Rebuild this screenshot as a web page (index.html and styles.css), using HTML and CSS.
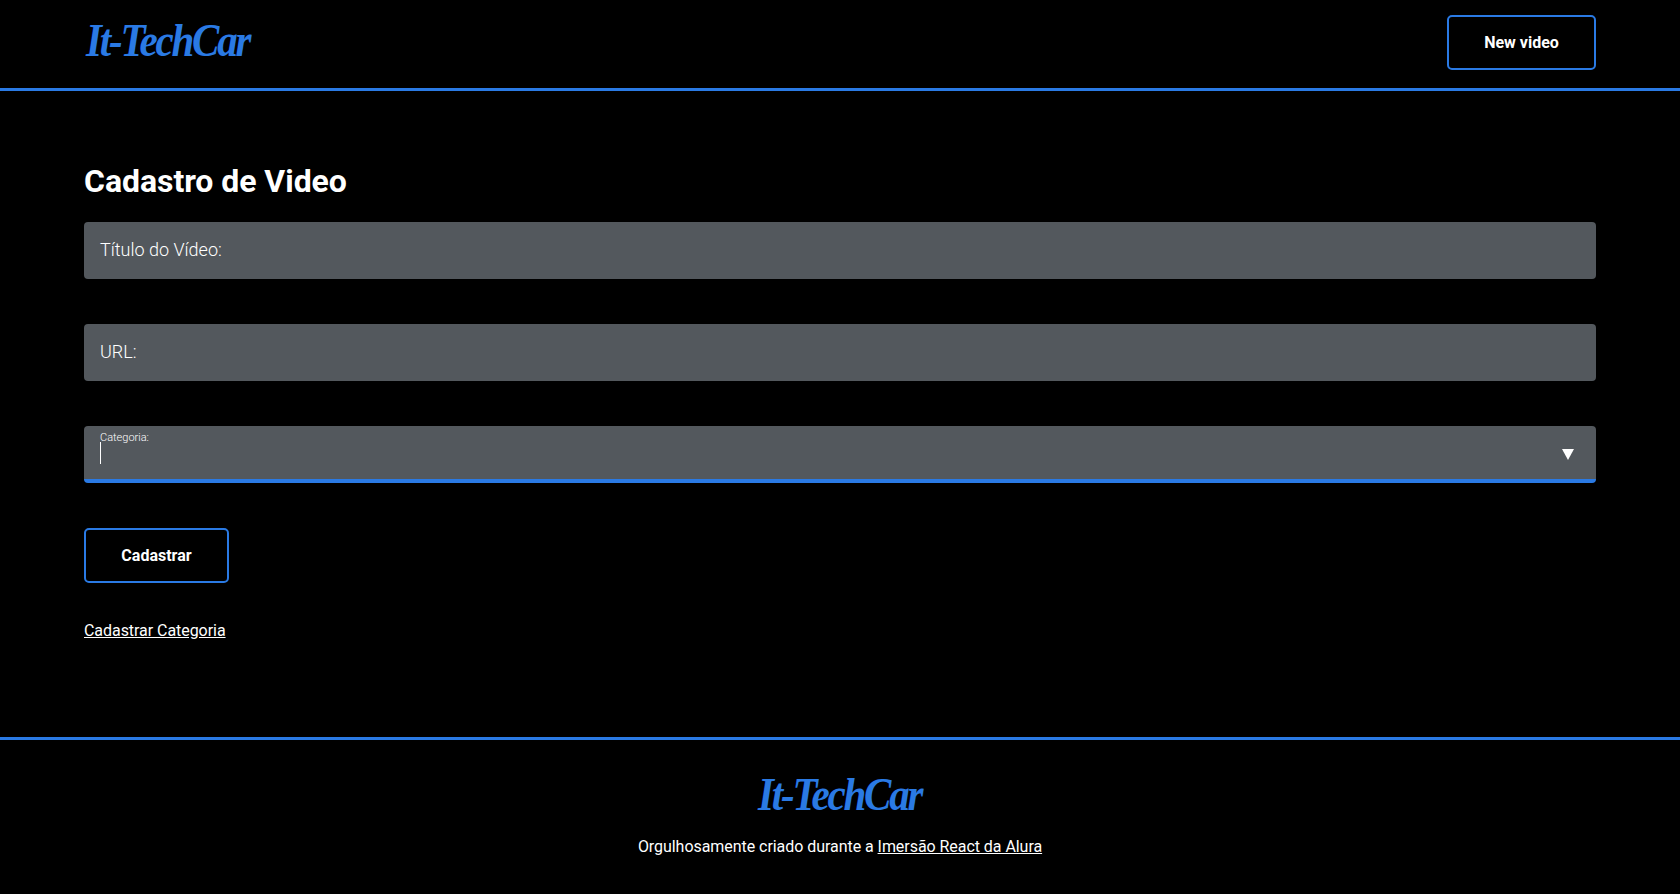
FILE: index.html
```html
<!DOCTYPE html>
<html lang="pt-BR">
<head>
    <meta charset="UTF-8">
    <meta name="viewport" content="width=device-width, initial-scale=1.0">
    <title>It-TechCar</title>
    <link rel="stylesheet" href="styles.css">
</head>
<body>
    <header class="menu">
        <a class="logo" href="#">It-TechCar</a>
        <a class="button button-new" href="#">New video</a>
    </header>

    <main class="content">
        <h1>Cadastro de Video</h1>
        <form class="form">
            <div class="field">
                <span class="field-label">Título do Vídeo:</span>
            </div>
            <div class="field">
                <span class="field-label">URL:</span>
            </div>
            <div class="field field-active">
                <span class="field-label">Categoria:</span>
                <span class="caret"></span>
                <span class="arrow"></span>
            </div>
            <button class="button button-submit" type="button">Cadastrar</button>
        </form>
        <a class="link" href="#">Cadastrar Categoria</a>
    </main>

    <footer class="footer">
        <a class="logo" href="#">It-TechCar</a>
        <p class="credits">Orgulhosamente criado durante a <a class="link" href="#">Imersão React da Alura</a></p>
    </footer>
</body>
</html>
```

FILE: styles.css
```css
* {
    box-sizing: border-box;
}
body {
    margin: 0;
    height: 894px;
    overflow: hidden;
    background-color: #000000;
    color: #ffffff;
    font-family: 'Roboto', 'Liberation Sans', sans-serif;
}
a {
    color: inherit;
}
.menu {
    height: 91px;
    padding: 15px 84px 0 86px;
    display: flex;
    justify-content: space-between;
    align-items: flex-start;
    border-bottom: 3px solid #2a7ae4;
}
.logo {
    display: block;
    width: 164px;
    color: #2a7ae4;
    font-family: 'Liberation Serif', serif;
    font-size: 41px;
    font-weight: 700;
    font-style: italic;
    line-height: 50px;
    letter-spacing: -2.2px;
    white-space: nowrap;
    text-decoration: none;
    transform: scaleY(1.12);
}
.button {
    display: flex;
    align-items: center;
    justify-content: center;
    height: 55px;
    background: #000000;
    color: #ffffff;
    border: 2px solid #2a7ae4;
    border-radius: 5px;
    font-family: inherit;
    font-size: 16px;
    font-weight: 700;
    text-decoration: none;
}
.button-new {
    width: 149px;
}
.button-submit {
    width: 145px;
    height: 55px;
}
.content {
    height: 646px;
    padding: 72px 84px 0;
}
h1 {
    margin: 0 0 23px;
    font-size: 32px;
    font-weight: 700;
    line-height: 36px;
    letter-spacing: -0.05px;
}
.form {
    margin-bottom: 38px;
}
.field {
    position: relative;
    height: 57px;
    margin-bottom: 45px;
    padding: 0 16px 2px;
    display: flex;
    align-items: center;
    background-color: #53585d;
    border-radius: 4px;
}
.field-label {
    color: #ffffff;
    font-size: 18px;
    font-weight: 300;
}
.field-active {
    padding-bottom: 0;
    border-bottom: 4px solid #2a7ae4;
}
.field-active .field-label {
    position: absolute;
    top: 5px;
    left: 16px;
    font-size: 11px;
    line-height: 13px;
}
.caret {
    width: 1px;
    height: 22px;
    margin-top: 1px;
    background-color: #ffffff;
}
.arrow {
    position: absolute;
    top: 23px;
    right: 22px;
    width: 0;
    height: 0;
    border-left: 6px solid transparent;
    border-right: 6px solid transparent;
    border-top: 11px solid #ffffff;
}
.link {
    font-size: 16px;
    font-weight: 400;
    letter-spacing: -0.05px;
    text-decoration: underline;
}
.content > .link {
    display: block;
    width: fit-content;
    line-height: 19px;
}
.footer {
    height: 157px;
    padding-top: 29px;
    display: flex;
    flex-direction: column;
    align-items: center;
    border-top: 3px solid #2a7ae4;
}
.credits {
    margin: 18px 0 0;
    font-size: 16px;
    line-height: 19px;
    letter-spacing: -0.05px;
}
```
